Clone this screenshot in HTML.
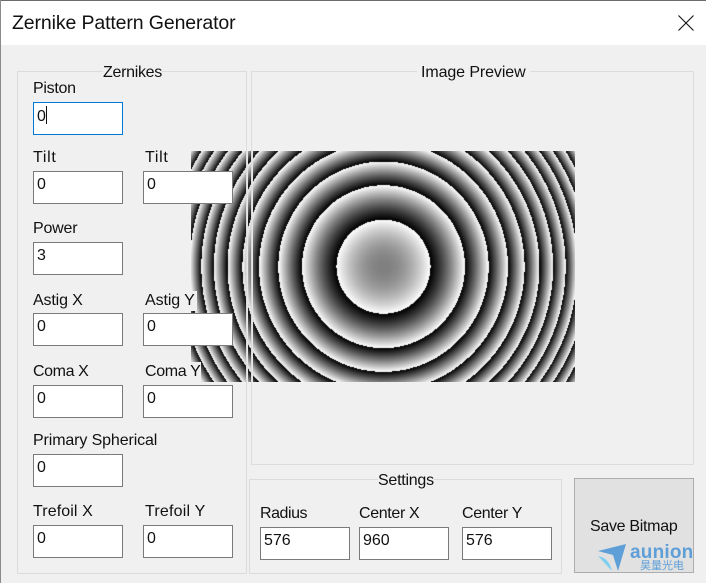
<!DOCTYPE html>
<html>
<head>
<meta charset="utf-8">
<style>
html,body{margin:0;padding:0;background:#f0f0f0;}
#w{position:relative;width:706px;height:583px;overflow:hidden;background:#f0f0f0;font-family:"Liberation Sans","Noto Sans CJK SC",sans-serif;font-size:16px;color:#000;}
#t{position:absolute;left:0;top:0;width:706px;height:45px;background:#fff;}
#tt{position:absolute;left:12px;top:11px;font-size:19.5px;line-height:24px;white-space:nowrap;letter-spacing:-.12px;color:#111;}
.g{position:absolute;box-sizing:border-box;border:1px solid #dcdcdc;}
.l{position:absolute;font-size:16px;line-height:20px;white-space:nowrap;background:#f0f0f0;color:#111;}
.n{background:transparent;}
.e{position:absolute;box-sizing:border-box;width:90px;height:33px;background:#fff;border:1px solid #7a7a7a;padding:3px 0 0 3px;font-size:16px;line-height:20px;color:#111;}
canvas{position:absolute;left:191px;top:151px;width:384px;height:231px;}
.v{position:absolute;top:151px;height:231px;width:1px;}
#b{position:absolute;left:574px;top:478px;width:120px;height:95px;box-sizing:border-box;background:#e1e1e1;border:1px solid #adadad;}
#bt{position:absolute;left:590px;top:517px;font-size:16px;line-height:20px;white-space:nowrap;letter-spacing:-.3px;color:#111;}
</style>
</head>
<body>
<div id="w">
<div id="t"></div>
<div style="position:absolute;left:0;top:0;width:706px;height:1px;background:#6b6b6b"></div>
<div style="position:absolute;left:0;top:0;width:1px;height:583px;background:#8a8a8a"></div>
<div id="tt">Zernike Pattern Generator</div>
<svg style="position:absolute;left:677px;top:14px" width="18" height="18" viewBox="0 0 18 18"><path d="M1.5 1.5L16.5 16.5M16.5 1.5L1.5 16.5" stroke="#111" stroke-width="1.1" fill="none"/></svg>

<div class="g" style="left:17px;top:71px;width:230px;height:503px"></div>
<div class="g" style="left:251px;top:71px;width:443px;height:394px"></div>
<div class="g" style="left:249px;top:479px;width:313px;height:95px"></div>

<canvas id="c" width="384" height="231"></canvas>
<div class="v" style="left:246px;background:#dcdcdc"></div>
<div class="v" style="left:247px;background:#e6e6e6"></div>
<div class="v" style="left:251px;background:#dcdcdc"></div>
<div class="v" style="left:252px;background:#e6e6e6"></div>

<div class="l" style="left:103px;top:63px;letter-spacing:-.3px">Zernikes</div>
<div class="l" style="left:417px;top:63px;padding:0 4px;letter-spacing:-.1px">Image Preview</div>
<div class="l" style="left:378px;top:471px;letter-spacing:-.25px">Settings</div>

<div class="l n" style="left:33px;top:79px;letter-spacing:-.3px">Piston</div>
<div class="e" style="left:33px;top:102px;border-color:#0078d7">0<span style="display:inline-block;width:1px;height:18px;background:#111;vertical-align:-3px"></span></div>
<div class="l n" style="left:33px;top:148px;letter-spacing:.7px">Tilt</div>
<div class="l n" style="left:145px;top:148px;letter-spacing:.7px">Tilt</div>
<div class="e" style="left:33px;top:171px">0</div>
<div class="e" style="left:143px;top:171px">0</div>
<div class="l n" style="left:33px;top:219px;letter-spacing:-.2px">Power</div>
<div class="e" style="left:33px;top:242px">3</div>
<div class="l n" style="left:33px;top:291px;letter-spacing:-.15px">Astig X</div>
<div class="l" style="left:145px;top:291px;padding-right:2px;letter-spacing:-.1px">Astig Y</div>
<div class="e" style="left:33px;top:313px">0</div>
<div class="e" style="left:143px;top:313px">0</div>
<div class="l n" style="left:33px;top:362px;letter-spacing:-.4px">Coma X</div>
<div class="l" style="left:145px;top:362px;padding-right:1px;letter-spacing:-.35px">Coma Y</div>
<div class="e" style="left:33px;top:385px">0</div>
<div class="e" style="left:143px;top:385px">0</div>
<div class="l n" style="left:33px;top:431px;letter-spacing:-.12px">Primary Spherical</div>
<div class="e" style="left:33px;top:454px">0</div>
<div class="l n" style="left:33px;top:502px;letter-spacing:.1px">Trefoil X</div>
<div class="l n" style="left:145px;top:502px;letter-spacing:.2px">Trefoil Y</div>
<div class="e" style="left:33px;top:525px">0</div>
<div class="e" style="left:143px;top:525px">0</div>

<div class="l n" style="left:260px;top:504px;letter-spacing:-.45px">Radius</div>
<div class="l n" style="left:359px;top:504px;letter-spacing:-.35px">Center X</div>
<div class="l n" style="left:462px;top:504px;letter-spacing:-.35px">Center Y</div>
<div class="e" style="left:260px;top:527px">576</div>
<div class="e" style="left:359px;top:527px">960</div>
<div class="e" style="left:462px;top:527px">576</div>

<div id="b"></div>
<div id="bt">Save Bitmap</div>

<svg style="position:absolute;left:595px;top:540px" width="40" height="34" viewBox="0 0 40 34">
<path d="M3 11L31 4L23 31L18 15Z" fill="#5f9fd8"/>
<path d="M3 16C10 17 15 22 17 31C12 26 8 21 3 16Z" fill="#7fd0ef"/>
</svg>
<div style="position:absolute;left:630px;top:541px;font-size:19px;line-height:24px;font-weight:bold;color:#5f9fd8;letter-spacing:.2px;white-space:nowrap">aunion</div>
<div style="position:absolute;left:640px;top:560px;font-size:11px;line-height:13px;color:#5f9fd8;white-space:nowrap">昊量光电</div>
</div>
<script>
var c=document.getElementById('c'),x=c.getContext('2d'),W=384,H=231,d=x.createImageData(W,H);
for(var j=0;j<H;j++)for(var i=0;i<W;i++){
var X=i*5-960,Y=j*5-576,r=(X*X+Y*Y)/(576*576);
var v=.5+3*r;v=v-Math.floor(v);
var g=Math.floor(v*256),p=(j*W+i)*4;
d.data[p]=d.data[p+1]=d.data[p+2]=g;d.data[p+3]=255;}
x.putImageData(d,0,0);
</script>
</body>
</html>
